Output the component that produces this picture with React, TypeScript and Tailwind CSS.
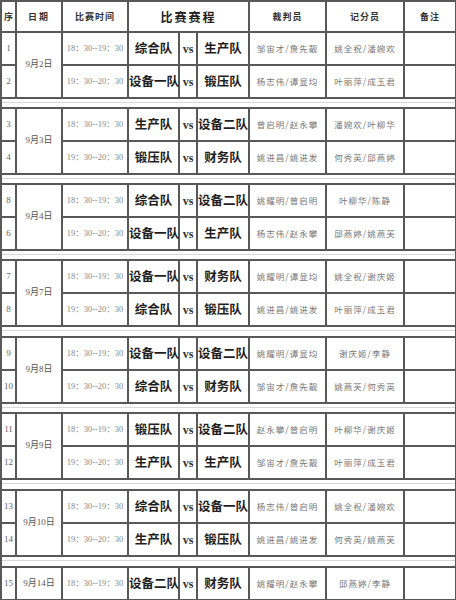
import React from 'react';

type Match = {
  no: string;
  time: string;
  home: string;
  away: string;
  referee: string;
  scorer: string;
};

type Day = {
  date: string;
  gap: number;
  matches: Match[];
};

const EARLY = '18：30--19：30';
const LATE = '19：30--20：30';

const days: Day[] = [
  {
    date: '9月2日',
    gap: 10,
    matches: [
      { no: '1', time: EARLY, home: '综合队', away: '生产队', referee: '邹宙才/詹先靓', scorer: '姚全祝/潘婉欢' },
      { no: '2', time: LATE, home: '设备一队', away: '锻压队', referee: '杨志伟/谭显均', scorer: '叶丽萍/成玉君' },
    ],
  },
  {
    date: '9月3日',
    gap: 10,
    matches: [
      { no: '3', time: EARLY, home: '生产队', away: '设备二队', referee: '曾启明/赵永攀', scorer: '潘婉欢/叶柳华' },
      { no: '4', time: LATE, home: '锻压队', away: '财务队', referee: '姚进昌/姚进发', scorer: '何秀英/邱燕婷' },
    ],
  },
  {
    date: '9月4日',
    gap: 10,
    matches: [
      { no: '8', time: EARLY, home: '综合队', away: '设备二队', referee: '姚耀明/曾启明', scorer: '叶柳华/陈静' },
      { no: '6', time: LATE, home: '设备一队', away: '生产队', referee: '杨志伟/赵永攀', scorer: '邱燕婷/姚燕芙' },
    ],
  },
  {
    date: '9月7日',
    gap: 11,
    matches: [
      { no: '7', time: EARLY, home: '设备一队', away: '财务队', referee: '姚耀明/谭显均', scorer: '姚全祝/谢庆姬' },
      { no: '8', time: LATE, home: '综合队', away: '锻压队', referee: '姚进昌/姚进发', scorer: '叶丽萍/成玉君' },
    ],
  },
  {
    date: '9月8日',
    gap: 10,
    matches: [
      { no: '9', time: EARLY, home: '设备一队', away: '设备二队', referee: '姚耀明/谭显均', scorer: '谢庆姬/李静' },
      { no: '10', time: LATE, home: '综合队', away: '财务队', referee: '邹宙才/詹先靓', scorer: '姚燕芙/何秀英' },
    ],
  },
  {
    date: '9月9日',
    gap: 11,
    matches: [
      { no: '11', time: EARLY, home: '锻压队', away: '设备二队', referee: '赵永攀/曾启明', scorer: '叶柳华/谢庆姬' },
      { no: '12', time: LATE, home: '生产队', away: '生产队', referee: '邹宙才/詹先靓', scorer: '叶丽萍/成玉君' },
    ],
  },
  {
    date: '9月10日',
    gap: 11,
    matches: [
      { no: '13', time: EARLY, home: '综合队', away: '设备一队', referee: '杨志伟/曾启明', scorer: '姚全祝/潘婉欢' },
      { no: '14', time: LATE, home: '生产队', away: '锻压队', referee: '姚进昌/姚进发', scorer: '何秀英/姚燕芙' },
    ],
  },
  {
    date: '9月14日',
    gap: 0,
    matches: [
      { no: '15', time: EARLY, home: '设备二队', away: '财务队', referee: '姚耀明/赵永攀', scorer: '邱燕婷/李静' },
    ],
  },
];

const cell = 'border-2 border-[#585858] p-0 text-center align-middle';
const serif = "font-['Liberation_Serif','Noto_Sans_CJK_SC',serif]";
const cjk = "font-['Noto_Sans_CJK_SC',sans-serif]";

export default function App() {
  return (
    <div className="w-[456px] h-[600px] overflow-hidden bg-white">
      <table className="w-[455px] table-fixed border-collapse">
        <colgroup>
          <col className="w-[15px]" />
          <col className="w-[46px]" />
          <col className="w-[66px]" />
          <col className="w-[51px]" />
          <col className="w-[18px]" />
          <col className="w-[52px]" />
          <col className="w-[77px]" />
          <col className="w-[78px]" />
          <col className="w-[52px]" />
        </colgroup>
        <tbody>
          {/* header */}
          <tr className="h-[31px]">
            <td className={`${cell} ${cjk} text-[9px] font-bold text-[#333]`}>序</td>
            <td className={`${cell} ${cjk} text-[9px] font-bold text-[#333] tracking-[2px]`}>日期</td>
            <td className={`${cell} ${cjk} text-[9px] font-bold text-[#333] tracking-[1px]`}>比赛时间</td>
            <td colSpan={3} className={`${cell} ${cjk} text-[12px] font-bold text-[#222] tracking-[2px]`}>比赛赛程</td>
            <td className={`${cell} ${cjk} text-[9px] font-bold text-[#333] tracking-[1px]`}>裁判员</td>
            <td className={`${cell} ${cjk} text-[9px] font-bold text-[#333] tracking-[1px]`}>记分员</td>
            <td className={`${cell} ${cjk} text-[9px] font-bold text-[#333] tracking-[1px]`}>备注</td>
          </tr>

          {days.map((day) => (
            <React.Fragment key={day.date}>
              {day.matches.map((m, i) => (
                <tr key={m.no + m.time} className="h-[33px]">
                  <td className={`${cell} ${serif} text-[9px] text-[#666]`}>{m.no}</td>
                  {i === 0 && (
                    <td rowSpan={day.matches.length} className={`${cell} ${serif} text-[9px] text-[#555]`}>
                      {day.date}
                    </td>
                  )}
                  <td className={`${cell} ${serif} text-[8.5px] text-[#8a8a8a] whitespace-nowrap`}>{m.time}</td>
                  <td className={`${cell} ${cjk} text-[12.5px] font-bold text-[#1e1e1e] whitespace-nowrap`}>{m.home}</td>
                  <td className={`${cell} ${serif} text-[12px] font-bold text-[#333]`}>vs</td>
                  <td className={`${cell} ${cjk} text-[12.5px] font-bold text-[#1e1e1e] whitespace-nowrap`}>{m.away}</td>
                  <td className={`${cell} ${cjk} text-[8.5px] text-[#777] tracking-[1px] whitespace-nowrap`}>{m.referee}</td>
                  <td className={`${cell} ${cjk} text-[8.5px] text-[#777] tracking-[1px] whitespace-nowrap`}>{m.scorer}</td>
                  <td className={cell}></td>
                </tr>
              ))}
              {day.gap > 0 && (
                <tr style={{ height: day.gap }}>
                  <td colSpan={9} className={`${cell} relative`}>
                    <div className="absolute inset-x-0 top-[3px] h-px bg-[#d8d8d8]" />
                  </td>
                </tr>
              )}
            </React.Fragment>
          ))}
        </tbody>
      </table>
    </div>
  );
}
